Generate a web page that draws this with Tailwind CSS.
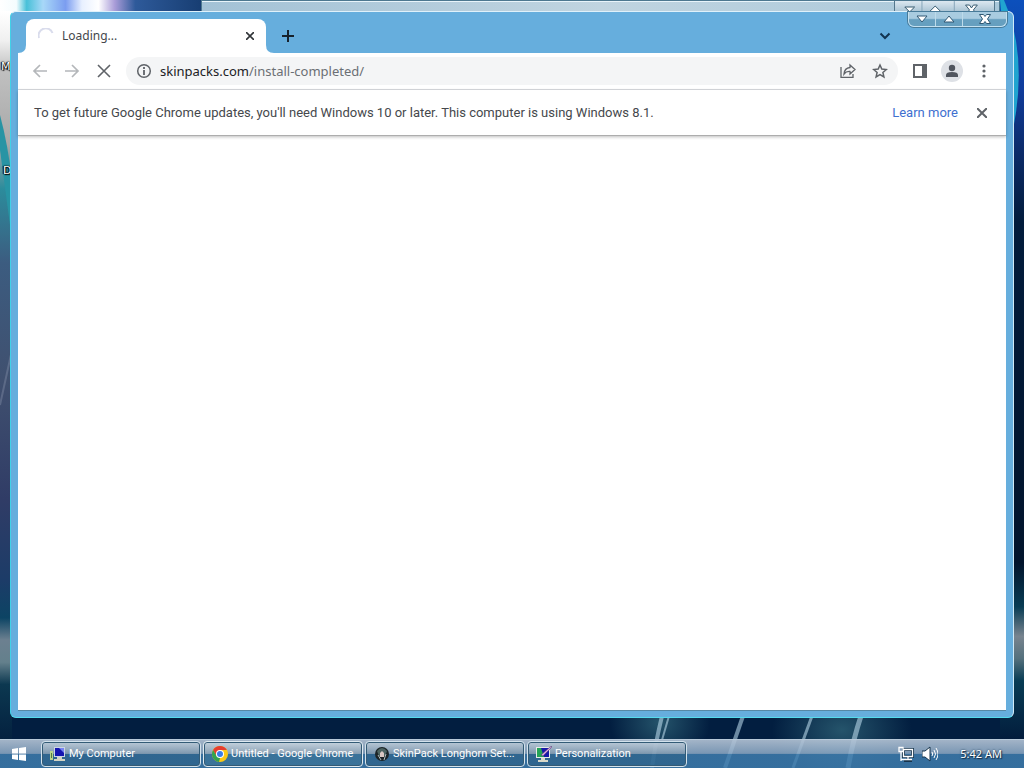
<!DOCTYPE html>
<html lang="en">

<head>
    <meta charset="UTF-8">
    <meta name="viewport" content="width=device-width, initial-scale=1.0">
    <script src="https://cdn.jsdelivr.net/npm/@tailwindcss/browser@4"></script>
    <title>Untitled - Google Chrome</title>
</head>

<body class="relative flex flex-col h-screen overflow-hidden bg-[#021c3c] font-['Noto_Sans',sans-serif]">

    <!-- wallpaper -->
    <svg class="absolute inset-0 w-full h-full" viewBox="0 0 1024 768" preserveAspectRatio="none" aria-hidden="true">
        <defs>
            <linearGradient id="sky">
                <stop offset="0" stop-color="#fff" />
                <stop offset=".08" stop-color="#f4fcfe" />
                <stop offset=".13" stop-color="#48c0d8" />
                <stop offset=".21" stop-color="#a8d8f8" />
                <stop offset=".32" stop-color="#7b9df0" />
                <stop offset=".4" stop-color="#e8f0ff" />
                <stop offset=".48" stop-color="#fff" />
                <stop offset=".56" stop-color="#a99cd8" />
                <stop offset=".66" stop-color="#2e5a9a" />
                <stop offset="1" stop-color="#163c70" />
            </linearGradient>
            <linearGradient id="left" x2="0" y2="1">
                <stop offset="0" stop-color="#fff" />
                <stop offset=".04" stop-color="#f0f0f0" />
                <stop offset=".08" stop-color="#c0c0c0" />
                <stop offset=".18" stop-color="#a8a8a8" />
                <stop offset=".24" stop-color="#2c8c9c" />
                <stop offset=".34" stop-color="#3c5c80" />
                <stop offset=".5" stop-color="#40506f" />
                <stop offset=".66" stop-color="#303c66" />
                <stop offset=".77" stop-color="#1c3c68" />
                <stop offset=".82" stop-color="#0c4464" />
                <stop offset=".85" stop-color="#6c8090" />
                <stop offset=".88" stop-color="#64808c" />
                <stop offset=".91" stop-color="#0c3850" />
                <stop offset="1" stop-color="#021c3c" />
            </linearGradient>
            <linearGradient id="right" x2="0" y2="1">
                <stop offset="0" stop-color="#0c50bc" />
                <stop offset=".12" stop-color="#103c9c" />
                <stop offset=".2" stop-color="#0c2c6c" />
                <stop offset=".3" stop-color="#021c3c" />
                <stop offset=".76" stop-color="#02142c" />
                <stop offset=".82" stop-color="#083c54" />
                <stop offset=".86" stop-color="#78848f" />
                <stop offset=".89" stop-color="#54707c" />
                <stop offset=".92" stop-color="#083c54" />
                <stop offset="1" stop-color="#021c3c" />
            </linearGradient>
            <radialGradient id="glow">
                <stop offset="0" stop-color="#3c7888" stop-opacity=".6" />
                <stop offset="1" stop-color="#3c7888" stop-opacity="0" />
            </radialGradient>
        </defs>
        <rect width="1024" height="768" fill="#021e40" />
        <rect width="205" height="20" fill="url(#sky)" />
        <rect y="11" width="12" height="740" fill="url(#left)" />
        <rect x="1000" width="24" height="740" fill="url(#right)" />
        <path d="M1000 0h4Q1028 55 1013 130z" fill="#20a4d0" />
        <path d="M0 115Q8 145 12 180v60L0 150z" fill="#2894a4" />
        <path d="M0 405L12 350" stroke="#a0a8c0" stroke-opacity=".3" stroke-width="2" />
        <ellipse cx="660" cy="722" rx="50" ry="44" fill="url(#glow)" />
        <ellipse cx="842" cy="730" rx="70" ry="50" fill="url(#glow)" />
        <g stroke="#c4e4f4" stroke-opacity=".55" fill="none">
            <path d="M662 716Q655 745 652 768" stroke-width="4" />
            <path d="M669 716L662 740" stroke-width="2" />
            <path d="M743 716L725 768" stroke-width="4" />
            <path d="M812 716L793 768" stroke-width="3" />
            <path d="M861 716Q853 740 848 768" stroke-width="5" />
        </g>
    </svg>

    <main class="relative flex-1 min-h-0">
        <!-- desktop icon labels, mostly covered by the window -->
        <span class="absolute left-px top-[59px] text-[11px] leading-4 text-white font-['DejaVu_Sans',sans-serif] [text-shadow:0_0_1px_#000,0_0_2px_#000,1px_1px_1px_#000,-1px_0_1px_#000]">My</span>
        <span class="absolute left-[3px] top-[163px] text-[11px] leading-4 text-white font-['DejaVu_Sans',sans-serif] [text-shadow:0_0_1px_#000,0_0_2px_#000,1px_1px_1px_#000,-1px_0_1px_#000]">D</span>

        <!-- window behind -->
        <div class="absolute left-[201px] right-6 top-0 h-5 bg-linear-to-r from-[#a3c2d6] via-[#c0d4e0] to-[#a9c8da] border-t border-x border-[#4d7890] shadow-[inset_0_1px_#e8f4fa]">
            <div class="absolute right-1 top-0 flex w-[101px] h-3 border-x border-[#54778c] bg-linear-to-b from-[#dce8f0] to-[#a4bfd0]">
                <svg class="w-full h-3" viewBox="0 0 101 12" fill="#fff" stroke="#34586e" aria-hidden="true">
                    <path d="M10 6h10l-5 5zM35 11l6-6 6 6zM72 4h4l2 3 2-3h4l-4 5 4 5h-4l-2-3-2 3h-4l4-5z" />
                    <path d="M27.500 0v12M60.500 0v12" stroke="#86a5b8" />
                </svg>
            </div>
        </div>

        <!-- browser window -->
        <section class="absolute left-[10px] right-[10px] top-[11px] bottom-[21px] flex flex-col px-[7px] pb-[6px] rounded-md bg-[#66aedd] border border-t-[#dff1fa] border-l-[#41d2e8] border-b-[#55dced] border-r-[#d0ebf8]">
            <div class="absolute right-[6px] top-0 flex w-[99px] h-[15px] rounded-b-md border border-t-0 border-[#c3e0ef] bg-linear-to-b from-[#a9cce0] from-45% to-[#669fbf] to-55% shadow-[0_0_0_1px_#487b99]">
                <button class="flex items-center justify-center w-[27px] border-r border-[#bddbea]" aria-label="Minimize">
                    <svg class="w-3 h-2" viewBox="0 0 12 8" fill="#fff" stroke="#315974"><path d="M1 1h10L6 7z" /></svg>
                </button>
                <button class="flex items-center justify-center w-[27px] border-r border-[#bddbea]" aria-label="Maximize">
                    <svg class="w-3 h-2" viewBox="0 0 12 8" fill="#fff" stroke="#315974"><path d="M1 7h10L6 1z" /></svg>
                </button>
                <button class="flex items-center justify-center flex-1" aria-label="Close">
                    <svg class="w-3 h-[10px]" viewBox="0 0 12 10" fill="#fff" stroke="#315974"><path d="M.500.500h4l1.500 2 1.500-2h4L8.500 5l3 4.500h-4L6 7.500l-1.500 2h-4l3-4.500z" /></svg>
                </button>
            </div>

            <!-- tab strip -->
            <div class="flex h-[41px] pt-[7px] pl-2">
                <div class="relative flex items-center w-60 px-3 rounded-t-lg bg-white">
                    <svg class="absolute -left-2 bottom-0 w-2 h-2" viewBox="0 0 8 8" fill="#fff" aria-hidden="true"><path d="M8 0v8H0q8 0 8-8" /></svg>
                    <svg class="absolute -right-2 bottom-0 w-2 h-2" viewBox="0 0 8 8" fill="#fff" aria-hidden="true"><path d="M0 0v8h8Q0 8 0 0" /></svg>
                    <svg class="w-4 h-4" viewBox="0 0 16 16" fill="none" stroke="#d9dcec" stroke-width="2" aria-hidden="true"><path d="M1 10A7 7 0 0 1 14.500 5" /></svg>
                    <span class="flex-1 ml-2 text-[12px] leading-4 text-[#45484c]">Loading...</span>
                    <button class="flex items-center justify-center w-4 h-4 -mr-1" aria-label="Close tab">
                        <svg class="w-2 h-2" viewBox="0 0 8 8" stroke="#303438" stroke-width="1.600"><path d="M0 0l8 8M8 0L0 8" /></svg>
                    </button>
                </div>
                <button class="flex items-center justify-center w-7 h-7 ml-2 mt-[3px]" aria-label="New tab">
                    <svg class="w-3 h-3" viewBox="0 0 12 12" stroke="#16222c" stroke-width="2"><path d="M6 0v12M0 6h12" /></svg>
                </button>
                <button class="flex items-center justify-center w-7 h-7 ml-auto mr-[107px] mt-[3px]" aria-label="Search tabs">
                    <svg class="w-3 h-2" viewBox="0 0 12 8" fill="none" stroke="#123450" stroke-width="2"><path d="M1.500 1.500L6 6l4.500-4.500" /></svg>
                </button>
            </div>

            <!-- toolbar -->
            <div class="flex items-center h-[37px] px-[14px] bg-white border-b border-[#dadce0] text-[#5f6368]">
                <button class="w-4 h-4" aria-label="Back">
                    <svg class="w-4 h-4" viewBox="0 0 16 16" fill="none" stroke="#b4b7ba" stroke-width="1.700"><path d="M15 8H2M8 2L2 8l6 6" /></svg>
                </button>
                <button class="w-4 h-4 ml-4" aria-label="Forward">
                    <svg class="w-4 h-4" viewBox="0 0 16 16" fill="none" stroke="#b4b7ba" stroke-width="1.700"><path d="M1 8h13M8 2l6 6-6 6" /></svg>
                </button>
                <button class="w-4 h-4 ml-4" aria-label="Stop loading">
                    <svg class="w-4 h-4" viewBox="0 0 16 16" stroke="currentColor" stroke-width="1.600"><path d="M2 2l12 12M14 2L2 14" /></svg>
                </button>
                <div class="flex items-center flex-1 h-7 ml-[14px] mr-[14px] px-[10px] rounded-full bg-[#f4f5f6]">
                    <svg class="w-4 h-4" viewBox="0 0 16 16" fill="none" stroke="currentColor" aria-hidden="true">
                        <circle cx="8" cy="8" r="6.300" stroke-width="1.500" />
                        <path d="M8 7v5M8 4v2" stroke-width="1.800" />
                    </svg>
                    <a href="#" class="flex-1 ml-2 text-[13px] leading-5 text-[#6b6f74]"><span class="text-[#202124]">skinpacks.com</span>/install-completed/</a>
                    <button class="w-4 h-4" aria-label="Share this page">
                        <svg class="w-4 h-4" viewBox="0 0 16 16" fill="none" stroke="currentColor" stroke-width="1.300"><path d="M1 4v10.300h12V11M10 2l5 4.500L10 11V8.500q-4-.3-6 2.500.5-6 6-6.500z" /></svg>
                    </button>
                    <button class="w-4 h-4 ml-4" aria-label="Bookmark this tab">
                        <svg class="w-4 h-4" viewBox="0 0 16 16" fill="none" stroke="currentColor" stroke-width="1.500"><path d="M8 2l1.800 4.100 4.500.4-3.400 3 1 4.400L8 11.600l-3.900 2.300 1-4.400-3.400-3 4.500-.4z" /></svg>
                    </button>
                </div>
                <button class="w-4 h-4" aria-label="Side panel">
                    <svg class="w-4 h-4" viewBox="0 0 16 16" fill="currentColor"><path d="M1 1h14v14H1zM3 3v10h7V3z" fill-rule="evenodd" /></svg>
                </button>
                <button class="flex items-center justify-center w-[22px] h-[22px] ml-[13px] rounded-full bg-[#dee1e6]" aria-label="Profile">
                    <svg class="w-4 h-4" viewBox="0 0 16 16" fill="#50555e"><circle cx="8" cy="5" r="3.200" /><path d="M2 14v-2q0-3 6-3t6 3v2z" /></svg>
                </button>
                <button class="w-4 h-4 ml-[13px]" aria-label="Menu">
                    <svg class="w-4 h-4" viewBox="0 0 16 16" fill="currentColor"><circle cx="8" cy="3" r="1.600" /><circle cx="8" cy="8" r="1.600" /><circle cx="8" cy="13" r="1.600" /></svg>
                </button>
            </div>

            <!-- info bar -->
            <div class="relative flex items-center h-[46px] px-4 bg-white border-b border-[#adadad] shadow-[0_1px_3px_#00000040] font-[Roboto,sans-serif] text-[13px] leading-5 text-[#45484c]">
                <p class="flex-1 whitespace-nowrap">To get future Google Chrome updates, you'll need Windows 10 or later. This computer is using Windows 8.1.</p>
                <a href="#" class="text-[#4070cf]">Learn more</a>
                <button class="flex items-center justify-center w-4 h-4 ml-4" aria-label="Dismiss">
                    <svg class="w-[10px] h-[10px]" viewBox="0 0 10 10" stroke="#5f6368" stroke-width="2"><path d="M0 0l10 10M10 0L0 10" /></svg>
                </button>
            </div>

            <div class="flex-1 bg-white border-b border-[#5688a5]"></div>
        </section>
    </main>

    <!-- taskbar -->
    <footer class="relative flex items-center h-[29px] shrink-0 bg-linear-to-b from-[#b4c4d6]/90 from-0% via-[#8facc8]/85 via-48% to-[#3f7dae]/85 to-50% border-t border-[#b7c9d9] text-white text-[11px] leading-4 [text-shadow:1px_1px_1px_#142f48,0_0_2px_#142f48]">
        <button class="flex items-center justify-center w-[38px] h-full" aria-label="Start">
            <svg class="w-[14px] h-[14px]" viewBox="0 0 14 14" fill="#fff"><path d="M0 2l6-1v5.500H0zM7 1l7-1v6.500H7zM0 7.500h6V13l-6-1zM7 7.500h7V14l-7-1z" /></svg>
        </button>
        <nav class="flex flex-1 gap-[2px] ml-[3px] font-[Roboto,sans-serif]">
            <button class="flex items-center gap-[3px] w-40 h-[26px] px-2 rounded-sm border border-[#d3e2ec] bg-linear-to-b from-[#c0cfdc]/80 via-[#8097aa]/60 via-49% to-[#2c6086]/60 to-50% shadow-[inset_0_0_0_1px_#335b76]">
                <svg class="w-4 h-4 shrink-0" viewBox="0 0 16 16" aria-hidden="true">
                    <path d="M0 5h3v9H0z" fill="#b8d48c" /><path d="M1 7h1v5H1z" fill="#557c42" />
                    <path d="M4 1h11v10H4z" fill="#cbd5e4" /><path d="M5 2h9v8H5z" fill="#1515b0" /><path d="M9 2h5v5z" fill="#7784f0" />
                    <path d="M7 11h5v2h3v2H4v-2h3z" fill="#d4d4c4" />
                </svg>
                My Computer
            </button>
            <button class="flex items-center gap-[3px] w-40 h-[26px] px-2 rounded-sm border border-[#dfeaf1] bg-linear-to-b from-[#d0dce5]/80 via-[#90a4b4]/70 via-49% to-[#3c7498]/70 to-50% shadow-[inset_0_0_0_1px_#335b76] whitespace-nowrap">
                <svg class="w-4 h-4 shrink-0" viewBox="0 0 16 16" aria-hidden="true">
                    <circle cx="8" cy="8" r="8" fill="#fbc816" />
                    <path d="M1.100 4A8 8 0 0 1 14.900 4H8L4.500 10z" fill="#e53d30" />
                    <path d="M1.100 4L4.600 10 8 12l-1 4A8 8 0 0 1 1.100 4" fill="#32a350" />
                    <circle cx="8" cy="8" r="4" fill="#fff" /><circle cx="8" cy="8" r="3" fill="#397de8" />
                </svg>
                Untitled - Google Chrome
            </button>
            <button class="flex items-center gap-[3px] w-40 h-[26px] px-2 rounded-sm border border-[#d3e2ec] bg-linear-to-b from-[#c0cfdc]/80 via-[#8097aa]/60 via-49% to-[#2c6086]/60 to-50% shadow-[inset_0_0_0_1px_#335b76] whitespace-nowrap">
                <svg class="w-4 h-4 shrink-0" viewBox="0 0 16 16" aria-hidden="true">
                    <circle cx="8" cy="8" r="7" fill="#1c2427" /><path d="M3 5q5-6 10 0l-2 5H5z" fill="#4c6260" />
                    <path d="M6 7l2-2 2 2v4H6z" fill="#d9c7c2" /><path d="M4 9l3 5M12 8l-2 6" stroke="#aebabc" />
                </svg>
                SkinPack Longhorn Set...
            </button>
            <button class="flex items-center gap-[3px] w-40 h-[26px] px-2 rounded-sm border border-[#d3e2ec] bg-linear-to-b from-[#c0cfdc]/80 via-[#8097aa]/60 via-49% to-[#2c6086]/60 to-50% shadow-[inset_0_0_0_1px_#335b76]">
                <svg class="w-4 h-4 shrink-0" viewBox="0 0 16 16" aria-hidden="true">
                    <path d="M0 1h14v11H0z" fill="#e6ebe7" /><path d="M1 2h12v9H1z" fill="#1717a8" />
                    <path d="M1 2h4l3 9H1z" fill="#23a357" /><path d="M5 12h4v2h3v2H2v-2h3z" fill="#d9d9c9" />
                    <path d="M5 9l9-8 2-1-1 2-8 8z" fill="#d9a4df" stroke="#493269" stroke-width=".5" />
                </svg>
                Personalization
            </button>
        </nav>
        <div class="flex items-center gap-2 mr-[22px]">
            <svg class="w-4 h-4" viewBox="0 0 16 16" fill="none" stroke="#fff" role="img" aria-label="Network">
                <path d="M5.500 3.500h9v7h-9zM10 11v2M6 14.500h8" stroke="#17344c" stroke-width="3" />
                <path d="M5.500 3.500h9v7h-9zM10 11v2M6 13.500h8M1 1.500h4v4H1zM3 6v9M3 13.500h4" stroke-width="1.300" />
            </svg>
            <svg class="w-4 h-4" viewBox="0 0 16 16" fill="none" stroke="#fff" role="img" aria-label="Volume">
                <path d="M0 5h3l5-4v14l-5-4H0z" fill="#fff" stroke="#17344c" />
                <path d="M10 6q1.500 2 0 4M12 4q3 4 0 8M14 2q4 6 0 12" />
            </svg>
            <time class="ml-[14px] text-[11px] leading-4">5:42 AM</time>
        </div>
    </footer>

</body>

</html>
